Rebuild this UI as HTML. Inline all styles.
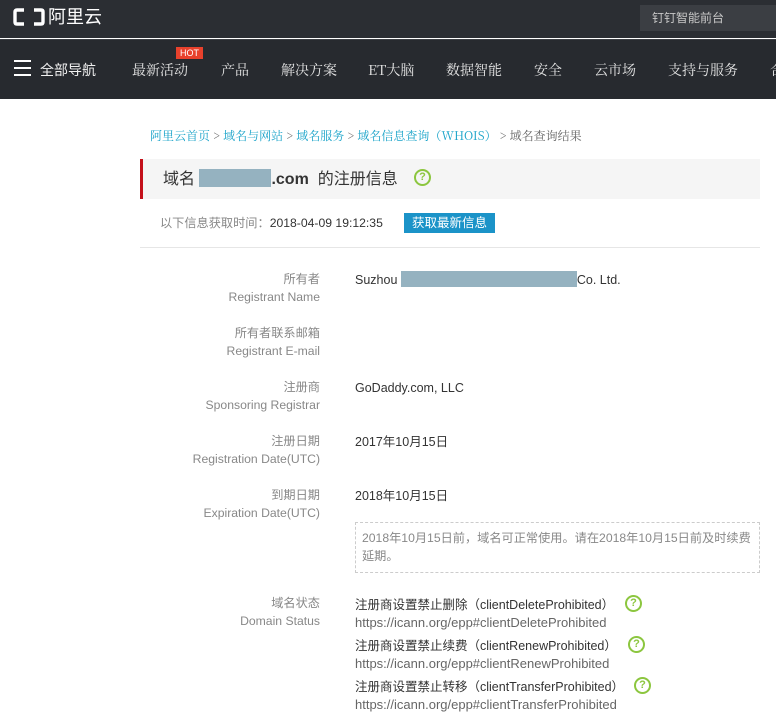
<!DOCTYPE html>
<html><head><meta charset="utf-8"><style>
*{margin:0;padding:0;box-sizing:border-box}
body{width:776px;height:714px;overflow:hidden;background:#fff;font-family:"Liberation Sans","Noto Sans CJK SC",sans-serif;position:relative}
.a{position:absolute;white-space:nowrap}
.top{position:absolute;left:0;top:0;width:776px;height:38px;background:#2b2e33}
.nav{position:absolute;left:0;top:39px;width:776px;height:60px;background:#272a2f;border-top:1px solid #3d4045}
.nv{position:absolute;top:61px;color:#e6e6e6;font-size:14px;font-family:"Noto Serif CJK SC",serif;line-height:18px}
.lab{position:absolute;right:456px;text-align:right;font-size:12.2px;color:#888;line-height:18px;white-space:nowrap}
.val{position:absolute;left:355px;font-size:12.5px;color:#333;line-height:18px;white-space:nowrap}
.q{position:absolute;width:17px;height:17px;border:2px solid #8cc63f;border-radius:50%;color:#8cc63f;font-size:11px;font-weight:bold;text-align:center;line-height:13px}
.url{color:#666;font-size:13px}
</style></head><body>
<div class="top"></div>
<svg class="a" style="left:13px;top:8px" width="32" height="18"><path d="M11 2H4Q2 2 2 4V14Q2 16 4 16H11M21 2H28Q30 2 30 4V14Q30 16 28 16H21" stroke="#fff" stroke-width="3.4" fill="none"/></svg>
<div class="a" style="left:48px;top:6px;color:#fff;font-size:18px;line-height:22px">阿里云</div>
<div class="a" style="left:640px;top:5px;width:136px;height:26px;background:#3b3e43;color:#c8c8c8;font-size:12px;line-height:26px;padding-left:12px">钉钉智能前台</div>
<div class="nav"></div>
<div class="a" style="left:14px;top:60px;width:17px;height:2px;background:#fff;box-shadow:0 7px 0 #fff,0 14px 0 #fff"></div>
<div class="a" style="left:40px;top:61px;color:#f0f0f0;font-size:14px;line-height:18px;font-family:'Noto Sans CJK SC',sans-serif">全部导航</div>
<div class="nv" style="left:132px">最新活动</div>
<div class="a" style="left:176px;top:47px;background:#e8412c;color:#fff;font-size:9px;line-height:12px;padding:0 4px">HOT</div>
<div class="nv" style="left:221px">产品</div>
<div class="nv" style="left:281px">解决方案</div>
<div class="nv" style="left:368px">ET大脑</div>
<div class="nv" style="left:446px">数据智能</div>
<div class="nv" style="left:534px">安全</div>
<div class="nv" style="left:594px">云市场</div>
<div class="nv" style="left:668px">支持与服务</div>
<div class="nv" style="left:770px">合</div>

<div class="a" style="left:150px;top:127px;font-size:12px;color:#666;font-family:'Noto Serif CJK SC',serif"><span style="color:#19a3c9">阿里云首页</span> &gt; <span style="color:#19a3c9">域名与网站</span> &gt; <span style="color:#19a3c9">域名服务</span> &gt; <span style="color:#19a3c9">域名信息查询（WHOIS）</span> &gt; 域名查询结果</div>
<div class="a" style="left:140px;top:159px;width:620px;height:40px;background:#f5f5f5;border-left:3px solid #c4101a"></div>
<div class="a" style="left:163px;top:169px;font-size:16px;color:#333;line-height:22px">域名 <span style="display:inline-block;width:72px;height:18px;background:#95b2c0;vertical-align:-3px"></span><b style="font-weight:bold">.com</b>&nbsp; 的注册信息</div>
<div class="q" style="left:414px;top:169px">?</div>
<div class="a" style="left:160px;top:214px;font-size:12.2px;color:#888;line-height:18px">以下信息获取时间：<span style="color:#333">2018-04-09 19:12:35</span></div>
<div class="a" style="left:404px;top:213px;width:91px;height:20px;background:#1b93c8;color:#fff;font-size:12.5px;line-height:20px;text-align:center">获取最新信息</div>
<div class="a" style="left:140px;top:247px;width:620px;height:1px;background:#e6e6e6"></div>

<div class="lab" style="top:270px">所有者<br>Registrant Name</div>
<div class="val" style="top:271px">Suzhou <span style="display:inline-block;width:176px;height:16px;background:#95b2c0;vertical-align:-3px"></span>Co. Ltd.</div>
<div class="lab" style="top:324px">所有者联系邮箱<br>Registrant E-mail</div>
<div class="lab" style="top:378px">注册商<br>Sponsoring Registrar</div>
<div class="val" style="top:379px">GoDaddy.com, LLC</div>
<div class="lab" style="top:432px">注册日期<br>Registration Date(UTC)</div>
<div class="val" style="top:433px">2017年10月15日</div>
<div class="lab" style="top:486px">到期日期<br>Expiration Date(UTC)</div>
<div class="val" style="top:487px">2018年10月15日</div>
<div class="a" style="left:355px;top:522px;width:405px;height:51px;border:1px dashed #ccc;padding:6px 6px;font-size:12.2px;color:#888;line-height:18px;white-space:normal">2018年10月15日前，域名可正常使用。请在2018年10月15日前及时续费延期。</div>
<div class="lab" style="top:594px">域名状态<br>Domain Status</div>
<div class="val" style="top:596px">注册商设置禁止删除（clientDeleteProhibited）<br><span class="url">https://icann.org/epp#clientDeleteProhibited</span></div>
<div class="q" style="left:625px;top:595px">?</div>
<div class="val" style="top:637px">注册商设置禁止续费（clientRenewProhibited）<br><span class="url">https://icann.org/epp#clientRenewProhibited</span></div>
<div class="q" style="left:628px;top:636px">?</div>
<div class="val" style="top:678px">注册商设置禁止转移（clientTransferProhibited）<br><span class="url">https://icann.org/epp#clientTransferProhibited</span></div>
<div class="q" style="left:634px;top:677px">?</div>
</body></html>
